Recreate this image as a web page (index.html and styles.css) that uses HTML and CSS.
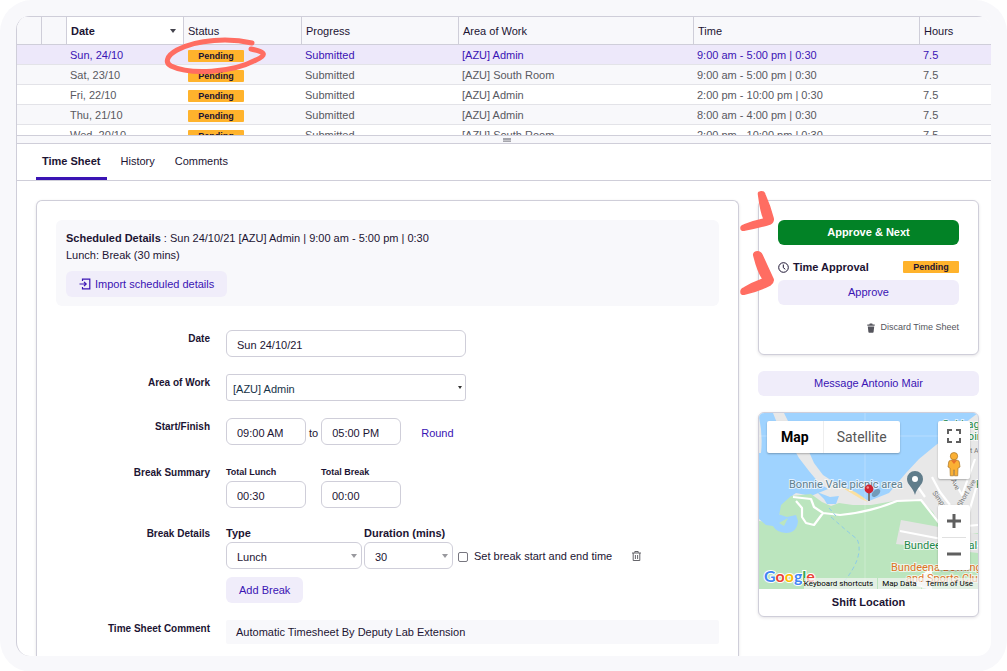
FILE: index.html
```html
<!DOCTYPE html>
<html lang="en">
<head>
<meta charset="utf-8">
<title>Time Sheet Approval</title>
<link rel="stylesheet" href="styles.css">
</head>
<body>
<div class="frame">
<div class="window">

  <div class="grid-scroll">
    <table class="grid">
      <colgroup><col class="c-first"><col class="c-mini"><col class="c-date"><col class="c-status"><col class="c-progress"><col class="c-area"><col class="c-time"><col></colgroup>
      <thead>
        <tr><th></th><th></th><th class="sorted" aria-sort="descending">Date</th><th>Status</th><th>Progress</th><th>Area of Work</th><th>Time</th><th>Hours</th></tr>
      </thead>
      <tbody>
        <tr class="selected"><td></td><td></td><td>Sun, 24/10</td><td><span class="badge">Pending<svg class="ring" width="106" height="40" viewBox="0 0 106 40" fill="none" stroke="#ff6d62" stroke-width="5" stroke-linecap="round" stroke-linejoin="round" aria-hidden="true"><path d="M88 7C66 2 34 3 13 14C2 20 1 27 7 30C26 39 68 37 92 24C103 19 102 16 87 13"/></svg></span></td><td>Submitted</td><td>[AZU] Admin</td><td>9:00 am - 5:00 pm | 0:30</td><td>7.5</td></tr>
        <tr><td></td><td></td><td>Sat, 23/10</td><td><span class="badge">Pending</span></td><td>Submitted</td><td>[AZU] South Room</td><td>9:00 am - 5:00 pm | 0:30</td><td>7.5</td></tr>
        <tr><td></td><td></td><td>Fri, 22/10</td><td><span class="badge">Pending</span></td><td>Submitted</td><td>[AZU] Admin</td><td>2:00 pm - 10:00 pm | 0:30</td><td>7.5</td></tr>
        <tr><td></td><td></td><td>Thu, 21/10</td><td><span class="badge">Pending</span></td><td>Submitted</td><td>[AZU] Admin</td><td>8:00 am - 4:00 pm | 0:30</td><td>7.5</td></tr>
        <tr><td></td><td></td><td>Wed, 20/10</td><td><span class="badge">Pending</span></td><td>Submitted</td><td>[AZU] South Room</td><td>2:00 pm - 10:00 pm | 0:30</td><td>7.5</td></tr>
      </tbody>
    </table>
  </div>
  <div class="splitter"><span class="grip"></span></div>

  <nav class="tabs">
    <a class="tab active" href="#timesheet">Time Sheet</a>
    <a class="tab" href="#history">History</a>
    <a class="tab" href="#comments">Comments</a>
  </nav>

  <div class="content">
    <main class="card sheet" id="timesheet">
      <section class="scheduled">
        <p><b>Scheduled Details</b> : Sun 24/10/21 [AZU] Admin | 9:00 am - 5:00 pm | 0:30</p>
        <p>Lunch: Break (30 mins)</p>
        <button class="btn import" type="button">
          <svg width="12" height="12" viewBox="0 0 12 12" fill="none" stroke="currentColor" stroke-width="1.2" aria-hidden="true"><path d="M3.5 3V1.2H10.8V10.8H3.5V9M0.5 6H7M5 3.8L7.2 6L5 8.2"/></svg>
          Import scheduled details
        </button>
      </section>

      <form class="form">
        <label class="name" for="date">Date</label>
        <div><input class="field wide" id="date" type="text" value="Sun 24/10/21"></div>

        <label class="name" for="area">Area of Work</label>
        <div><span class="select wide"><select class="field area" id="area"><option>[AZU] Admin</option></select></span></div>

        <label class="name" for="start">Start/Finish</label>
        <div class="line">
          <input class="field time" id="start" type="text" value="09:00 AM">
          <label class="to" for="finish">to</label>
          <input class="field time" id="finish" type="text" value="05:00 PM">
          <a class="round" href="#round">Round</a>
        </div>

        <div class="name low">Break Summary</div>
        <div class="summary">
          <div class="stack"><label class="small" for="lunch">Total Lunch</label><input class="field time" id="lunch" type="text" value="00:30"></div>
          <div class="stack"><label class="small" for="break">Total Break</label><input class="field time" id="break" type="text" value="00:00"></div>
        </div>

        <div class="name">Break Details</div>
        <div>
          <div class="details">
            <div class="stack"><label class="sub" for="type">Type</label><span class="select grey type"><select class="field" id="type"><option>Lunch</option></select></span></div>
            <div class="stack"><label class="sub" for="duration">Duration (mins)</label><span class="select grey duration"><select class="field" id="duration"><option>30</option></select></span></div>
            <label class="check"><input type="checkbox">Set break start and end time</label>
            <button class="trash" type="button" aria-label="Delete break">
              <svg width="9" height="10" viewBox="0 0 9 10" fill="none" stroke="#55555a" aria-hidden="true"><path d="M0 2H9M2.8 1.8V.5H6.2V1.8M1.2 2V9.5H7.8V2M3.4 4V8M5.6 4V8" stroke-width=".9"/></svg>
            </button>
          </div>
          <button class="btn add" type="button">Add Break</button>
        </div>

        <div class="name">Time Sheet Comment</div>
        <p class="comment">Automatic Timesheet By Deputy Lab Extension</p>
      </form>
    </main>

    <aside class="side">
      <section class="card approval">
        <svg class="arrows" width="40" height="112" viewBox="0 0 40 112" fill="#ff6d62" stroke="#ff6d62" stroke-width="1.6" stroke-linejoin="round" aria-hidden="true">
          <path d="M20.500 6Q20.500 4 22 4Q26 3 27 7Q32 18 35 30Q36 34 32 36Q22 39 7 42Q3 43 3 40Q3 38 6 37Q16 33 26 31Q23 25 20.500 6Z"/>
          <path d="M16 68Q15 65 18 64Q22 63 24 67Q30 80 35 91Q36 94 32 97Q20 103 7 106Q3 107 3 104Q3 101 6 100Q14 95 25 91Q20 84 16 68Z"/>
        </svg>
        <button class="btn approve-next" type="button">Approve &amp; Next</button>
        <div class="status">
          <svg width="11" height="11" viewBox="0 0 11 11" fill="none" stroke="currentColor" aria-hidden="true"><circle cx="5.5" cy="5.5" r="4.8"/><path d="M5.3 2.5V5.7L7.3 7.3"/></svg>
          <b>Time Approval</b>
          <span class="badge">Pending</span>
        </div>
        <button class="btn full" type="button">Approve</button>
        <button class="discard" type="button">
          <svg width="8" height="10" viewBox="0 0 8 10" aria-hidden="true"><path d="M.3 1.6H2.3L2.8.4H5.2L5.7 1.6H7.7V2.8H.3ZM.8 3.6H7.2L6.6 9Q6.5 9.7 5.8 9.7H2.2Q1.5 9.7 1.4 9Z" fill="#55555d"/></svg>
          Discard Time Sheet
        </button>
      </section>

      <button class="btn full" type="button">Message Antonio Mair</button>

      <section class="card location">
        <div class="map">
          <svg class="terrain" viewBox="0 0 219 176" preserveAspectRatio="xMidYMid slice" role="img" aria-label="Map of Bonnie Vale">
            <rect width="219" height="176" fill="#9fd3ff"/>
            <path d="M0 4Q4 22 2 40L0 40ZM14 0H25L31 12L47 32L55 50L64 62L84 75L110 88L130 80L147 60L160 46L177 32L219 0V176H0V106L10 104L20 102L34 82L37 80L52 83L69 76L60 70L50 58L40 45L30 27L18 10Z" fill="#e8e8e8"/>
            <path d="M82 74Q98 77 109 89L102 86Z" fill="#fbe0a0"/>
            <path d="M0 108L12 109L20 103L22 92L32 83L52 81L63 89L72 93L80 90L94 92L112 92L135 88L160 86L174 99L181 112L181 120H219V176H0Z" fill="#bbe5be"/>
            <path d="M58 79L71 84L80 83L77 91L68 91L65 86Z" fill="#9fd3ff"/>
            <path d="M0 90L18 88L21 94L19 101L28 104L37 102L39 108Q38 120 27 120Q17 119 14 113L7 112L0 106ZM20 110L29 105L25 113Z" fill="#9fd3ff" fill-rule="evenodd"/>
            <path d="M142 107L219 121V140L137 131Z" fill="#e4e4e4"/>
            <path d="M141 118L219 133M150 170L172 157V176Z" fill="#f3f6f2" stroke="#fff" stroke-width="2"/>
            <g fill="none" stroke="#fff" stroke-linejoin="round"><path d="M34 84L52 86L55 94L64 100L81 102Q112 99 138 88L162 87L184 115L219 112M64 100L55 112L47 110L43 104L43 95L37 88M159 74L166 84M173 64L181 79L191 92M194 66L203 82L216 46M204 120L217 75" stroke-width="2.2"/></g>
            <path d="M72 104Q90 120 98 126Q106 143 84 170M70 95L77 103" fill="none" stroke="#8dcbe8" stroke-dasharray="4 3"/>
            <path d="M106 0V176M0 23H219" stroke="#ffffff" stroke-opacity=".25"/>
            <g class="road"><text x="173" y="80" transform="rotate(55 173 80)">Simpson</text><text x="192" y="67" transform="rotate(65 192 67)">Ave</text><text x="202" y="94" transform="rotate(-60 202 94)">Short Ave</text><text x="211" y="40">t Ave</text></g>
            <g class="place green"><text x="183" y="15">Cabbage</text><text x="202" y="27">Point</text><text x="217" y="75">K</text><text x="145" y="136">Bundeena Oval</text></g>
            <g class="place orange"><text x="132" y="158">Bundeena Bowling</text><text x="147" y="169">and Sports Club</text></g>
            <text class="place grey" x="30" y="75">Bonnie Vale picnic area</text>
            <path d="M156 82C154 74 148 72 148 66A8 8 0 0 1 164 66C164 72 158 74 156 82Z" fill="#607d8b"/><circle cx="156" cy="66" r="3" fill="#fff"/>
            <ellipse cx="117" cy="80" rx="5" ry="3" fill="#3c5664" opacity=".45" transform="rotate(-40 117 80)"/>
            <path d="M110 80V88" stroke="#777" stroke-width="2"/><circle cx="110" cy="76" r="4.4" fill="#cf2330"/><circle cx="108.8" cy="74.5" r="1.2" fill="#f28a8a"/>
            <text class="google" x="5" y="169"><tspan fill="#4285f4">G</tspan><tspan fill="#ea4335">o</tspan><tspan fill="#fbbc05">o</tspan><tspan fill="#4285f4">g</tspan><tspan fill="#34a853">l</tspan><tspan fill="#ea4335">e</tspan></text>
          </svg>
          <div class="map-type"><button class="on" type="button">Map</button><button type="button">Satellite</button></div>
          <div class="map-tools">
            <button type="button" aria-label="Full screen"><svg width="14" height="14" viewBox="0 0 14 14" fill="none" stroke="#5f5f5f" stroke-width="2" aria-hidden="true"><path d="M1 5V1H5M9 1H13V5M13 9V13H9M5 13H1V9"/></svg></button>
            <button type="button" aria-label="Street View"><svg width="14" height="25" viewBox="0 0 14 25" aria-hidden="true"><circle cx="7" cy="4.2" r="3.7" fill="#fbb034" stroke="#a87528" stroke-width=".7"/><path d="M3.5 8.3H10.5Q12 8.5 12.3 10L13 15L11 16L10.7 23.8H7.5V18H6.5V23.8H3.3L3 16L1 15L1.7 10Q2 8.5 3.5 8.3Z" fill="#fbb034" stroke="#a87528" stroke-width=".7"/><path d="M4 8.3H10L7 12Z" fill="#e8722b"/></svg></button>
          </div>
          <div class="map-zoom">
            <button type="button" aria-label="Zoom in"><svg width="14" height="14" viewBox="0 0 14 14" stroke="#5f5f5f" stroke-width="3" aria-hidden="true"><path d="M0 7H14M7 0V14"/></svg></button>
            <button type="button" aria-label="Zoom out"><svg width="14" height="14" viewBox="0 0 14 14" stroke="#5f5f5f" stroke-width="3" aria-hidden="true"><path d="M0 7H14"/></svg></button>
          </div>
          <div class="map-legal"><a href="#keys">Keyboard shortcuts</a><a href="#data">Map Data</a><a href="#terms">Terms of Use</a></div>
        </div>
        <h2>Shift Location</h2>
      </section>
    </aside>
  </div>
</div>
</div>
</body>
</html>
```

FILE: styles.css
```css
:root {
  --ink: #1c1433;
  --line: #cfced9;
  --violet: #3a14b4;
  --lilac: #f0edfa;
  --pale: #f8f8fb;
}
* { box-sizing: border-box; }
body {
  margin: 0;
  background: #fff;
  color: var(--ink);
  font: 11px/17px "Liberation Sans", Arial, sans-serif;
}
button, input, select { font: inherit; color: inherit; margin: 0; }
button { border: 0; background: none; padding: 0; cursor: pointer; }
a { color: inherit; text-decoration: none; }
p, h2 { margin: 0; }

.frame {
  display: flex;
  min-height: 100vh;
  padding: 16px;
  background: var(--pale);
  border-radius: 32px;
}
.window {
  flex: 1;
  min-width: 0;
  display: flex;
  flex-direction: column;
  background: #fff;
  border-left: 1px solid var(--line);
  border-radius: 14px;
  overflow: hidden;
}

/* Shift list */
.grid-scroll { height: 119px; overflow: hidden; background: var(--pale); }
.grid { width: 100%; table-layout: fixed; border-collapse: separate; border-spacing: 0; }
.c-first { width: 24px; }
.c-mini { width: 25px; }
.c-date { width: 117px; }
.c-status { width: 118px; }
.c-progress { width: 157px; }
.c-area { width: 235px; }
.c-time { width: 226px; }
.grid th {
  height: 29px;
  padding: 2px 4px 0;
  text-align: left;
  font-weight: 400;
  background: var(--pale);
  border: 0 solid var(--line);
  border-width: 1px 0 1px 1px;
}
.grid th:first-child { border-left: 0; }
.grid th.sorted { position: relative; font-weight: 700; background: #fff; }
.sorted::after {
  content: "";
  position: absolute;
  right: 7px;
  top: 12px;
  border: 3px solid transparent;
  border-top: 4px solid #44434d;
  border-bottom: 0;
}
.grid td {
  height: 20px;
  padding: 2px 4px 0;
  line-height: 17px;
  color: #58585f;
  background: #fff;
  border-bottom: 1px solid #e3e3e8;
  white-space: nowrap;
}
.grid tr:nth-child(even) td { background: var(--pale); }
.grid tr.selected td { background: #ede8fa; color: var(--violet); }
.grid td .badge { margin-top: 3px; margin-left: 1px; vertical-align: top; }

.badge {
  position: relative;
  display: inline-block;
  width: 56px;
  height: 12px;
  border-radius: 1px;
  background: #ffb32c;
  color: var(--ink);
  font-size: 9px;
  font-weight: 700;
  line-height: 12px;
  text-align: center;
}
.ring { position: absolute; left: -24px; top: -14px; z-index: 2; }

.splitter {
  display: flex;
  align-items: center;
  justify-content: center;
  height: 9px;
  background: var(--pale);
  border: solid var(--line);
  border-width: 1px 0;
}
.grip { width: 8px; height: 4px; margin-left: 6px; border: solid #a5a5ac; border-width: 2px 0 1px; background: #c5c5ca; }

/* Tabs */
.tabs { display: flex; gap: 8px; height: 37px; padding-left: 19px; border-bottom: 1px solid var(--line); }
.tab { padding: 9px 6px 0; }
.tab.active { font-weight: 700; border-bottom: 3px solid var(--violet); }

/* Content */
.content { flex: 1; display: flex; gap: 19px; padding: 19px 12px 0 19px; }
.card {
  background: #fff;
  border: 1px solid var(--line);
  border-radius: 6px;
  box-shadow: 0 1px 3px #1c143320;
}
.sheet { flex: 1; min-width: 0; padding: 19px 19px 12px; border-bottom: 0; border-radius: 6px 6px 0 0; }
.btn {
  height: 26px;
  padding: 0 13px;
  border-radius: 6px;
  background: var(--lilac);
  color: var(--violet);
}
.scheduled { padding: 10px 10px 9px; background: var(--pale); border-radius: 6px; }
.import { display: flex; align-items: center; gap: 4px; margin-top: 7px; }

.form { display: grid; grid-template-columns: 154px 1fr; gap: 17px 16px; margin-top: 24px; }
.name { text-align: right; font-size: 10px; font-weight: 700; }
.low { padding-top: 2px; }
.field {
  display: block;
  width: 100%;
  height: 27px;
  padding: 2px 10px 0;
  border: 1px solid var(--line);
  border-radius: 6px;
  background: #fff;
  outline: 0;
}
.wide { width: 240px; }
.time { width: 80px; }
.select { position: relative; display: block; }
.select .field { appearance: none; padding-top: 3px; }
.select .area { border-radius: 3px; padding-left: 6px; color: #173348; }
.select::after {
  content: "";
  position: absolute;
  right: 4px;
  top: 12px;
  border: 2px solid transparent;
  border-top: 3px solid #333;
  border-bottom: 0;
}
.select.grey::after { right: 5px; top: 12px; border-width: 4px 3px 0; border-top-color: #99999e; }
.type { width: 136px; }
.duration { width: 89px; }
.line { display: flex; align-items: center; }
.to { padding: 3px 3px 0; }
.round { margin-left: 20px; padding-top: 3px; color: var(--violet); }
.summary { display: flex; gap: 15px; }
.small { display: block; padding-top: 2px; font-size: 9px; font-weight: 700; line-height: 17px; }
.sub { display: block; font-weight: 700; }
.details { display: flex; align-items: flex-end; gap: 2px; }
.check { display: flex; align-items: center; gap: 6px; height: 25px; margin-left: 3px; }
.check input {
  appearance: none;
  width: 10px;
  height: 10px;
  border: 1px solid #77767f;
  border-radius: 2px;
  background: #fff;
}
.trash { display: flex; align-items: center; height: 27px; margin-left: 18px; }
.add { margin-top: 8px; }
.comment { padding: 4px 10px 3px; background: var(--pale); border-radius: 2px; }

/* Side column */
.side { width: 221px; display: flex; flex-direction: column; align-items: stretch; gap: 16px; }
.approval { position: relative; display: flex; flex-direction: column; padding: 19px 19px 18px; }
.arrows { position: absolute; left: -21px; top: -13px; }
.approve-next { height: 25px; background: #028226; color: #fff; font-weight: 700; }
.status { display: flex; align-items: center; gap: 4px; height: 20px; margin: 12px 0 3px; }
.status .badge { margin-left: auto; }
.full { height: 25px; }
.discard {
  display: flex;
  align-items: center;
  gap: 5px;
  align-self: flex-end;
  margin-top: 14px;
  color: #55555d;
  font-size: 9px;
}
.location { overflow: hidden; }
.location h2 { font-size: 11px; line-height: 27px; text-align: center; }

.map { position: relative; height: 176px; font-family: Roboto, sans-serif; }
.terrain { display: block; width: 100%; height: 100%; font-family: Roboto, sans-serif; }
.place { font-size: 11px; paint-order: stroke; stroke: #ffffffb0; stroke-width: 2px; }
.place.green { fill: #1f8a4c; }
.place.orange { fill: #dd7324; }
.place.grey { fill: #5f7f8e; }
.road { font-size: 7px; fill: #777; }
.google { font: 700 16px Lato, sans-serif; paint-order: stroke; stroke: #fff; stroke-width: 2px; }

/* Controls laid over the map */
.map-type, .map-tools, .map-zoom { position: absolute; background: #fff; border-radius: 2px; box-shadow: 0 1px 2px #0004; }
.map-type { left: 8px; top: 8px; display: flex; height: 32px; font-size: 14px; color: #565656; }
.map-type button { padding: 0 13px; }
.map-type .on { padding: 0 14px; color: #000; font-weight: 700; border-right: 1px solid #eee; }
.map-tools, .map-zoom { right: 8px; width: 32px; display: flex; flex-direction: column; }
.map-tools { top: 8px; height: 58px; }
.map-zoom { top: 92px; height: 65px; padding: 0 4px; }
.map-tools button, .map-zoom button { flex: 1; display: flex; align-items: center; justify-content: center; }
.map-zoom button + button { border-top: 1px solid #e0e0e0; }
.map-legal { position: absolute; right: 0; bottom: 0; display: flex; gap: 1px; font-size: 8px; line-height: 11px; color: #000; white-space: nowrap; }
.map-legal a { padding: 0 4px; background: #f5f5f5b0; }
.map-legal a:first-child { padding-left: 0; }
.map-legal a:last-child { padding-right: 5px; }
```
